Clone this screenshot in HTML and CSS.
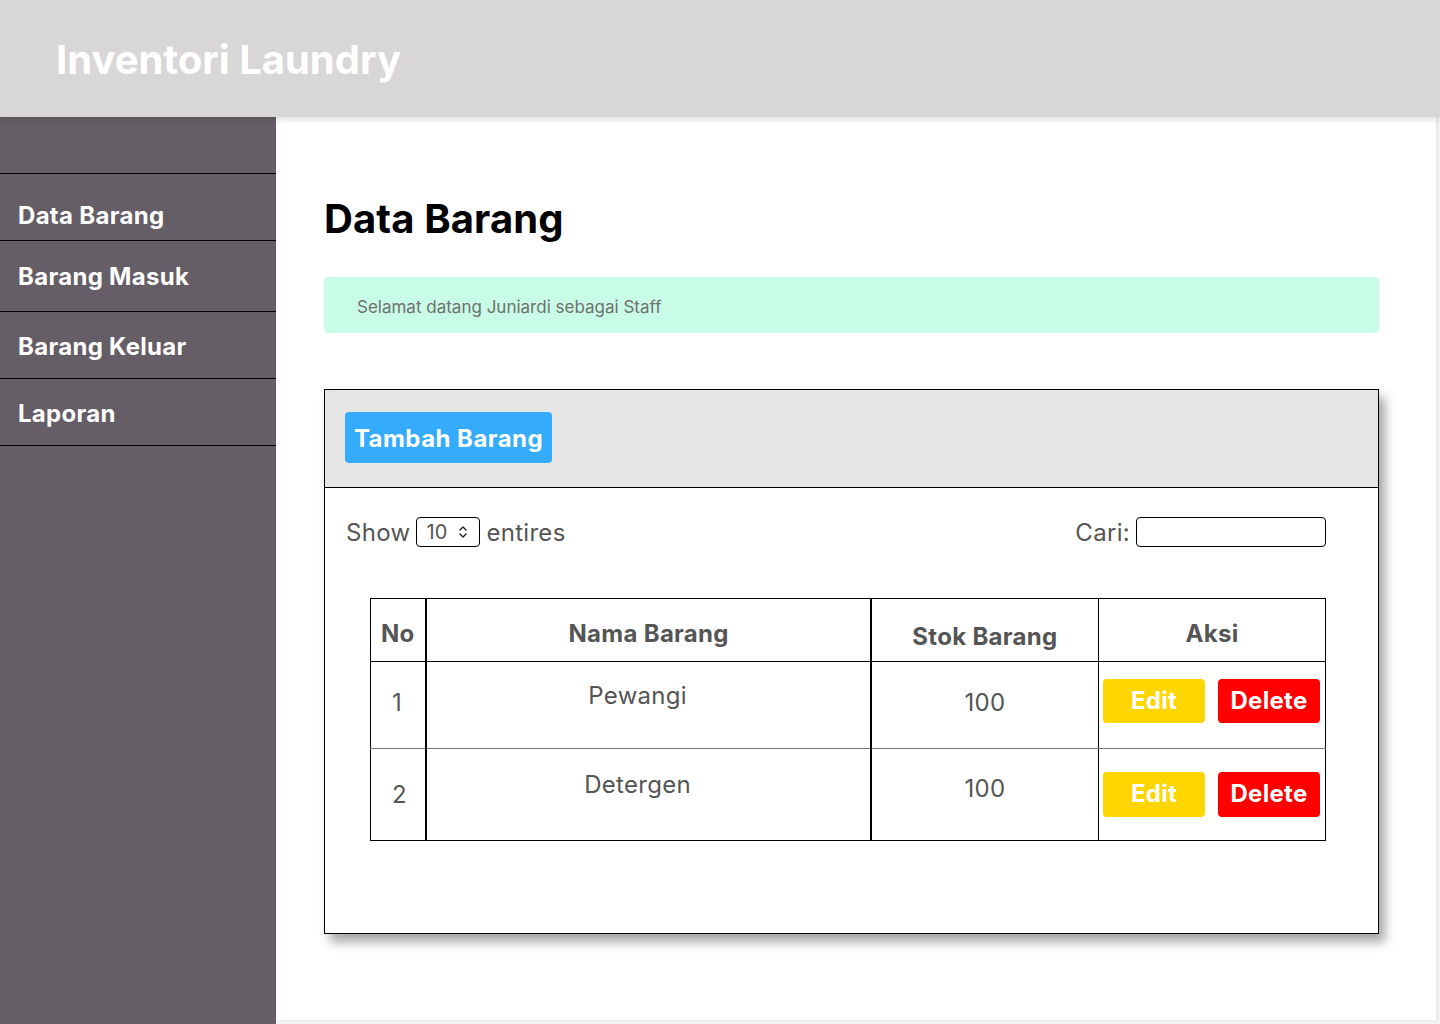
FILE: index.html
```html
<!DOCTYPE html>
<html lang="id">
<head>
<meta charset="utf-8">
<title>Inventori Laundry</title>
<link rel="stylesheet" href="styles.css">
</head>
<body>
<header class="topbar">
  <h1 class="brand">Inventori Laundry</h1>
</header>
<div class="layout">
  <nav class="sidebar">
    <div class="side-spacer"></div>
    <a class="side-item item-1" href="#">Data Barang</a>
    <a class="side-item item-2" href="#">Barang Masuk</a>
    <a class="side-item item-3" href="#">Barang Keluar</a>
    <a class="side-item item-4" href="#">Laporan</a>
  </nav>
  <main class="main">
    <h2 class="page-title">Data Barang</h2>
    <div class="alert">Selamat datang Juniardi sebagai Staff</div>
    <section class="card">
      <div class="card-head">
        <button class="btn btn-blue">Tambah Barang</button>
      </div>
      <div class="card-body">
        <div class="controls">
          <div class="show">
            <span>Show</span>
            <span class="select">10
              <svg class="chev" width="10" height="14" viewBox="0 0 10 14"><path d="M2 5 L5 2 L8 5 M2 9 L5 12 L8 9" fill="none" stroke="#222" stroke-width="1.4" stroke-linecap="round" stroke-linejoin="round"/></svg>
            </span>
            <span>entires</span>
          </div>
          <div class="search">
            <span>Cari:</span>
            <span class="input"></span>
          </div>
        </div>
        <table class="data">
          <thead>
            <tr>
              <th class="c-no">No</th>
              <th class="c-nama">Nama Barang</th>
              <th class="c-stok"><span class="low">Stok Barang</span></th>
              <th class="c-aksi">Aksi</th>
            </tr>
          </thead>
          <tbody>
            <tr class="r1">
              <td class="c-no">1</td>
              <td class="c-nama"><span class="up">Pewangi</span></td>
              <td class="c-stok">100</td>
              <td class="c-aksi"><div class="actions"><button class="btn btn-yellow">Edit</button><button class="btn btn-red">Delete</button></div></td>
            </tr>
            <tr class="r2">
              <td class="c-no">2</td>
              <td class="c-nama"><span class="up">Detergen</span></td>
              <td class="c-stok"><span class="up2">100</span></td>
              <td class="c-aksi"><div class="actions"><button class="btn btn-yellow">Edit</button><button class="btn btn-red">Delete</button></div></td>
            </tr>
          </tbody>
        </table>
      </div>
    </section>
  </main>
</div>
</body>
</html>
```
FILE: styles.css
```css
* { box-sizing: border-box; }
html, body { margin: 0; padding: 0; }
body {
  width: 1440px;
  height: 1024px;
  overflow: hidden;
  background: #f3f3f3;
  font-family: Inter, "Noto Sans", "Liberation Sans", sans-serif;
  letter-spacing: 0.3px;
}
.topbar {
  position: relative;
  z-index: 2;
  height: 117px;
  background: #d8d6d7;
  box-shadow: 0 3px 6px rgba(0,0,0,0.12);
  display: flex;
  align-items: center;
  padding-left: 56px;
}
.brand {
  margin: 0;
  color: #fff;
  font-size: 40px;
  font-weight: 700;
  letter-spacing: 0;
  padding-top: 2px;
}
.layout {
  display: flex;
  height: 903px;
}
.sidebar {
  width: 276px;
  height: 907px;
  background: #655e66;
  display: flex;
  flex-direction: column;
}
.side-spacer {
  height: 57px;
  border-bottom: 1px solid #000;
  flex: none;
}
.side-item {
  display: flex;
  align-items: center;
  padding-left: 18px;
  color: #fff;
  font-weight: 700;
  font-size: 24px;
  text-decoration: none;
  border-bottom: 1px solid #000;
  flex: none;
}
.item-1 { height: 67px; padding-top: 16px; }
.item-2 { height: 71px; padding-bottom: 0; }
.item-3 { height: 67px; padding-top: 2px; }
.item-4 { height: 67px; padding-top: 2px; }
.main {
  flex: 1;
  margin-right: 4px;
  background: #fff;
  padding: 1px 57px 0 48px;
  box-shadow: 1px 0 3px rgba(0,0,0,0.08);
}
.page-title {
  margin: 0;
  padding-top: 79px;
  font-size: 40px;
  line-height: 44px;
  font-weight: 700;
  color: #000;
  letter-spacing: 0.1px;
}
.alert {
  margin-top: 36px;
  height: 56px;
  background: #c8fce6;
  border-radius: 4px;
  color: #707070;
  font-size: 17px;
  letter-spacing: 0;
  display: flex;
  align-items: center;
  padding-left: 33px;
  padding-top: 3px;
}
.card {
  margin-top: 56px;
  height: 545px;
  border: 1px solid #000;
  background: #fff;
  box-shadow: 6px 8px 10px rgba(0,0,0,0.35);
}
.card-head {
  height: 98px;
  background: #e6e6e6;
  border-bottom: 1px solid #000;
  padding: 22px 20px 0;
}
.btn {
  border: none;
  font-family: inherit;
  letter-spacing: 0.3px;
  font-weight: 700;
  color: #fff;
  font-size: 24px;
  border-radius: 4px;
  padding: 0;
  cursor: pointer;
}
.btn-blue {
  background: #35abfd;
  height: 51px;
  width: 207px;
  font-size: 24px;
  letter-spacing: 0.45px;
  padding-top: 1px;
}
.card-body {
  padding: 28px 52px 0 21px;
}
.controls {
  display: flex;
  justify-content: space-between;
  align-items: center;
  height: 32px;
  color: #555;
  font-size: 24px;
}
.show, .search {
  display: flex;
  align-items: center;
  gap: 6px;
}
.select {
  width: 64px;
  height: 30px;
  border: 1px solid #000;
  border-radius: 4px;
  display: inline-flex;
  align-items: center;
  justify-content: space-between;
  padding: 0 11px 0 9px;
  font-size: 20px;
  color: #555;
}
.chev { display: block; }
.input {
  width: 190px;
  height: 30px;
  border: 1px solid #000;
  border-radius: 4px;
  display: inline-block;
}
.data {
  margin: 50px 0 0 24px;
  width: 956px;
  border-collapse: collapse;
  color: #555;
  font-size: 24px;
}
.data th, .data td {
  border: 1px solid #000;
  padding: 0;
  text-align: center;
}
.data th {
  height: 63px;
  font-weight: 700;
  padding-top: 7px;
}
.data th.c-no { text-align: left; padding-left: 10px; }
.data td.c-no { text-align: left; padding-left: 21px; }
.data .c-no { width: 56px; border-right-width: 2px; }
.data .c-nama { width: 445px; border-right-width: 2px; }
.data .c-stok { width: 228px; }
.data .c-aksi { width: 227px; }
.low { position: relative; top: 3px; }
.up { position: relative; top: -5px; left: -11px; }
.up2 { position: relative; top: -6px; }
.r1 td { height: 87px; padding-bottom: 5px; }
.r2 td { height: 92px; padding-top: 0; }
.r1 td.c-nama { padding-bottom: 9px; }
.r2 td.c-nama { padding-top: 0; padding-bottom: 10px; }
.r1 td { border-bottom-color: #777; }
.actions {
  display: flex;
  justify-content: space-between;
  padding: 0 5px 0 4px;
}
.r1 td.c-aksi { padding-bottom: 0; }
.r1 .actions { margin-top: -9px; }
.r2 td.c-aksi { padding-top: 0; }
.r2 .actions { margin-top: -1px; }
.btn-yellow, .btn-red {
  width: 102px;
  height: 44px;
  padding-bottom: 1px;
}
.r2 .btn-yellow, .r2 .btn-red { height: 45px; }
.btn-yellow { background: #ffd600; }
.btn-red { background: #ff0000; }
```
